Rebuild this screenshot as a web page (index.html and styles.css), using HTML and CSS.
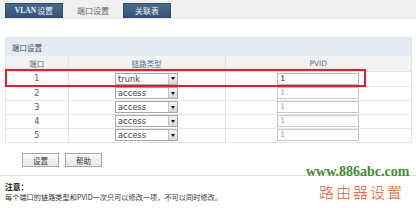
FILE: index.html
```html
<!DOCTYPE html>
<html lang="zh-CN">
<head>
<meta charset="utf-8">
<title>端口设置</title>
<link rel="stylesheet" href="styles.css">
</head>
<body>
<div class="page">
  <div class="tabs">
    <div class="tab tab-vlan"><b class="lat">VLAN</b>设置</div>
    <div class="tab active">端口设置</div>
    <div class="tab tab-assoc">关联表</div>
  </div>
  <div class="content">
    <div class="section">
      <div class="section-head">端口设置</div>
      <table class="grid">
        <colgroup><col class="c1"><col class="c2"><col class="c3"></colgroup>
        <thead>
          <tr><th>端口</th><th>链路类型</th><th>PVID</th></tr>
        </thead>
        <tbody>
          <tr class="first"><td>1</td><td><span class="sel"><span class="sel-text">trunk</span><span class="sel-btn"><i class="tri"></i></span></span></td><td><span class="inp">1</span></td></tr>
          <tr><td>2</td><td><span class="sel"><span class="sel-text">access</span><span class="sel-btn"><i class="tri"></i></span></span></td><td><span class="inp dis">1</span></td></tr>
          <tr><td>3</td><td><span class="sel"><span class="sel-text">access</span><span class="sel-btn"><i class="tri"></i></span></span></td><td><span class="inp dis">1</span></td></tr>
          <tr><td>4</td><td><span class="sel"><span class="sel-text">access</span><span class="sel-btn"><i class="tri"></i></span></span></td><td><span class="inp dis">1</span></td></tr>
          <tr><td>5</td><td><span class="sel"><span class="sel-text">access</span><span class="sel-btn"><i class="tri"></i></span></span></td><td><span class="inp dis">1</span></td></tr>
        </tbody>
      </table>
    </div>
    <div class="buttons">
      <span class="btn">设置</span>
      <span class="btn">帮助</span>
    </div>
  </div>
  <div class="sep"></div>
  <div class="note">
    <div class="note-title">注意：</div>
    <div class="note-text">每个端口的链路类型和PVID一次只可以修改一项，不可以同时修改。</div>
  </div>
  <div class="highlight"></div>
  <div class="wm-url">www.886abc.com</div>
  <div class="wm-cn">路由器设置</div>
</div>
</body>
</html>
```

FILE: styles.css
```css
* { box-sizing: border-box; }
html, body { margin: 0; padding: 0; background: #ffffff; }
body {
  font-family: "DejaVu Sans", "Noto Sans CJK SC", sans-serif;
  color: #555;
}
.page { position: relative; width: 416px; height: 208px; overflow: hidden; }

.tabs {
  display: flex;
  gap: 5px;
  height: 19px;
  padding: 3px 0 0 5px;
  background: #f0f0f0;
  border-bottom: 1px solid #e6e6e6;
}
.tab {
  height: 15px;
  width: 50px;
  display: flex;
  align-items: center;
  justify-content: center;
  font-family: "Noto Sans CJK SC", sans-serif;
  font-size: 8px;
  color: #eef3f8;
  background: linear-gradient(#4a6a8b, #34557a);
  border: 1px solid #2e4c6c;
}
.tab-vlan { width: 58px; }
.tab-assoc { width: 48px; }
.tab .lat { font-family: "Liberation Serif", serif; font-size: 7.5px; font-weight: bold; margin-right: 1px; }
.tab.active { background: transparent; border-color: transparent; color: #666; }

.content { padding: 0 4px 0 5px; }
.section { margin-top: 18px; border: 1px solid #dfe6ec; }
.section-head {
  height: 18px;
  padding-left: 6px;
  display: flex;
  align-items: center;
  font-family: "Noto Sans CJK SC", sans-serif;
  font-size: 7.5px;
  color: #3a4c60;
  background: #e4ecf2;
}
.grid { width: 100%; border-collapse: collapse; table-layout: fixed; }
.c1 { width: 62px; }
.c2 { width: 157px; }
.grid th {
  height: 15px;
  padding: 0;
  font-weight: normal;
  font-size: 7.5px;
  color: #4f6f90;
  background: #f3f3f3;
  border-left: 1px solid #e2e2e2;
  border-bottom: 1px solid #e2e2e2;
}
.grid td {
  height: 14px;
  padding: 0;
  text-align: center;
  font-size: 8px;
  color: #555;
  border-left: 1px solid #e2e2e2;
  border-bottom: 1px solid #e8e8e8;
}
.grid tr.first td { height: 15px; }
.grid th:first-child, .grid td:first-child { border-left: 0; }
.grid tr:last-child td { border-bottom: 0; }

.sel {
  display: inline-flex;
  vertical-align: middle;
  width: 63px;
  height: 12px;
  border: 1px solid #a9a9a9;
  background: #fff;
  text-align: left;
}
.sel-text { flex: 1; padding-left: 2px; font-size: 8.3px; line-height: 10px; color: #444; }
.sel-btn {
  width: 9px;
  margin: 0;
  background: linear-gradient(#f4f4f4, #d8d8d8);
  border-left: 1px solid #c4c4c4;
  display: flex;
  align-items: center;
  justify-content: center;
}
.tri {
  width: 0; height: 0;
  border-left: 2.5px solid transparent;
  border-right: 2.5px solid transparent;
  border-top: 3px solid #111;
}
.inp {
  display: inline-block;
  vertical-align: middle;
  width: 82px;
  height: 12px;
  border: 1px solid #b8b8b8;
  background: #fff;
  text-align: left;
  padding-left: 2px;
  font-size: 7.5px;
  line-height: 10px;
  color: #222;
}
.inp.dis { color: #9a9a9a; border-color: #c8c8c8; }

.buttons { display: flex; gap: 6px; padding: 10px 0 0 17px; }
.btn {
  width: 37px;
  height: 14px;
  display: flex;
  align-items: center;
  justify-content: center;
  font-family: "Noto Sans CJK SC", sans-serif;
  font-size: 7.5px;
  color: #333;
  background: linear-gradient(#fbfbfb, #e6e6e6);
  border: 1px solid #a8a8a8;
}
.sep { margin-top: 8px; height: 1px; background: #dedede; }
.note { padding: 6px 0 0 5px; font-family: "Noto Sans CJK SC", sans-serif; color: #333; }
.note-title { font-size: 7.8px; font-weight: bold; line-height: 9px; color: #111; }
.note-text { font-size: 7.2px; line-height: 10px; margin-top: 1px; }

.highlight {
  position: absolute;
  left: 5px;
  top: 69px;
  width: 361px;
  height: 18px;
  border: 2px solid #d2262e;
  box-shadow: 0 0 1px rgba(210, 38, 46, 0.4);
}
.wm-url {
  position: absolute;
  left: 306px;
  top: 164px;
  font-family: "Liberation Serif", serif;
  font-weight: bold;
  font-size: 14px;
  color: #3f8d2c;
}
.wm-cn {
  position: absolute;
  left: 319px;
  top: 182px;
  font-family: "Noto Sans CJK SC", sans-serif;
  font-weight: 300;
  font-size: 15px;
  letter-spacing: 2px;
  line-height: 20px;
  color: #e4572c;
}
```
